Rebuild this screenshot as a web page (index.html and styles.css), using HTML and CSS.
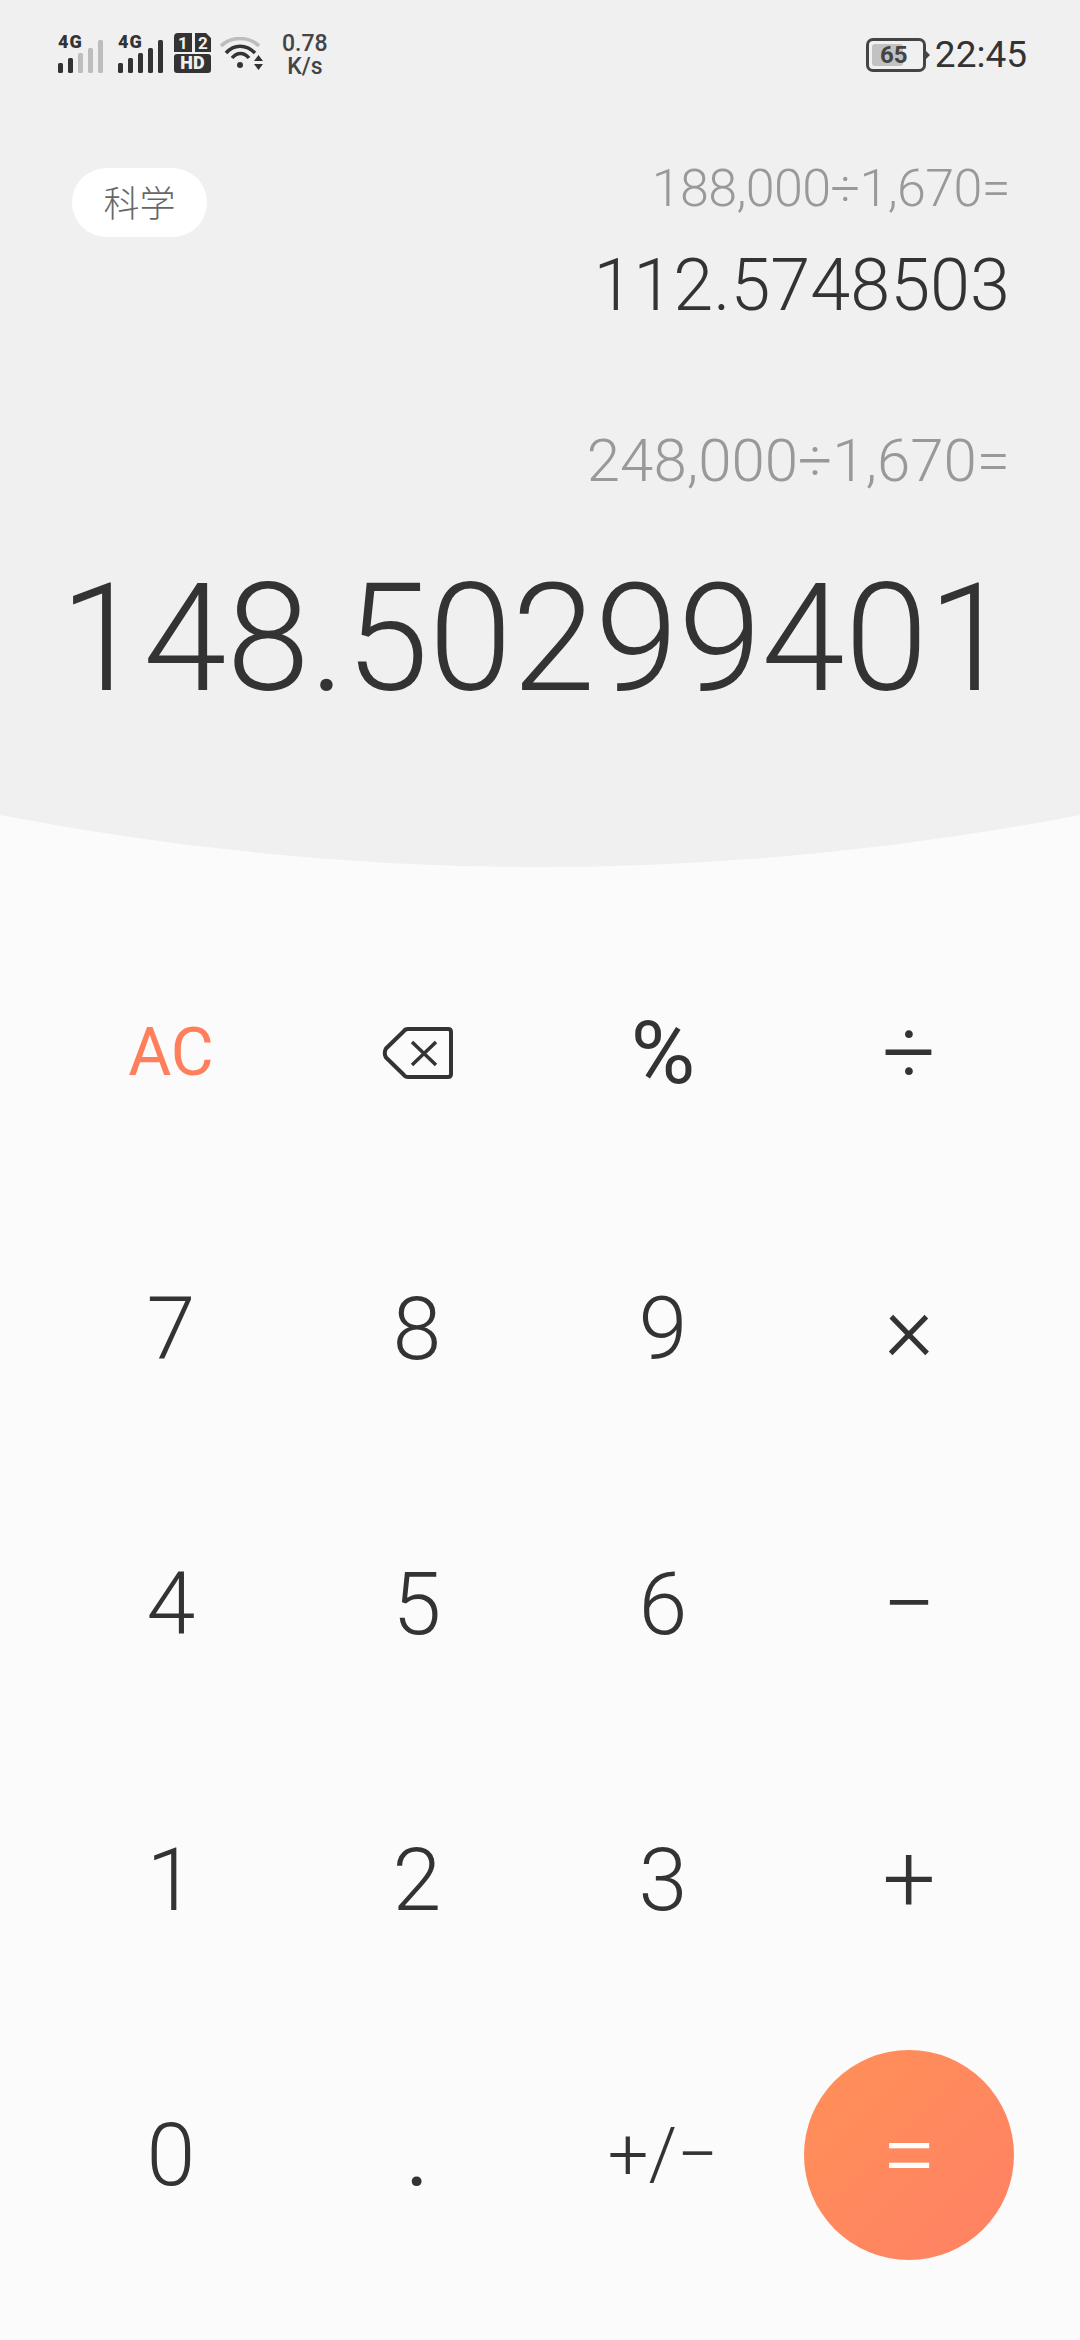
FILE: index.html
```html
<!DOCTYPE html>
<html lang="zh">
<head>
  <meta charset="UTF-8">
  <meta name="viewport" content="width=device-width, initial-scale=1.0">
  <title>Calculator</title>
  <link rel="stylesheet" href="styles.css">
</head>
<body>
<div class="top">
  <div class="status-bar">
    <div class="status-left">
      <svg class="signal" width="46" height="44" viewBox="0 -2 46 44">
        <text x="0" y="16" class="net">4G</text>
        <rect x="0" y="31" width="5" height="10" rx="1.500" fill="#333"/>
        <rect x="10" y="26" width="5" height="15" rx="1.500" fill="#333"/>
        <rect x="20" y="21" width="5" height="20" rx="1.500" fill="#bdbdbd"/>
        <rect x="30" y="16" width="5" height="25" rx="1.500" fill="#bdbdbd"/>
        <rect x="40" y="8" width="5" height="33" rx="1.500" fill="#bdbdbd"/>
      </svg>
      <svg class="signal" width="46" height="44" viewBox="0 -2 46 44">
        <text x="0" y="16" class="net">4G</text>
        <rect x="0" y="31" width="5" height="10" rx="1.500" fill="#333"/>
        <rect x="10" y="26" width="5" height="15" rx="1.500" fill="#333"/>
        <rect x="20" y="21" width="5" height="20" rx="1.500" fill="#333"/>
        <rect x="30" y="16" width="5" height="25" rx="1.500" fill="#333"/>
        <rect x="40" y="8" width="5" height="33" rx="1.500" fill="#333"/>
      </svg>
      <svg class="sim" width="37" height="40" viewBox="0 0 37 40">
        <path d="M4 0h14v19H0V4a4 4 0 0 1 4-4zM21 0h11l5 5v14H21z" fill="#333"/>
        <rect x="0" y="21" width="37" height="19" rx="3" fill="#333"/>
        <text x="9" y="16" class="sim-num">1</text>
        <text x="29" y="16" class="sim-num">2</text>
        <text x="18.500" y="36" class="sim-hd">HD</text>
      </svg>
      <svg class="wifi" width="44" height="34" viewBox="0 0 44 34">
        <path d="M1 9C11 -1 29 -1 39 9" fill="none" stroke="#bdbdbd" stroke-width="3.500"/>
        <path d="M6 16C14 7 26 7 35 16" fill="none" stroke="#333" stroke-width="3.500"/>
        <path d="M12 21C17 15 24 15 29 21" fill="none" stroke="#333" stroke-width="3.500"/>
        <circle cx="20" cy="28" r="3" fill="#333"/>
        <path d="M38.500 18l4.500 6h-9zM38.500 33l4.500-6h-9z" fill="#333"/>
      </svg>
      <div class="speed"><span>0.78</span><span>K/s</span></div>
    </div>
    <div class="status-right">
      <div class="battery">
        <div class="battery-fill"></div>
        <span class="battery-num">65</span>
      </div>
      <span class="clock">22:45</span>
    </div>
  </div>

  <div class="display">
    <div class="history">
      <div class="mode">科学</div>
      <div class="history-lines">
        <div class="expr-small">188,000÷1,670=</div>
        <div class="result-small">112.5748503</div>
      </div>
    </div>
    <div class="expr">248,000÷1,670=</div>
    <div class="result">148.50299401</div>
  </div>
</div>
<svg class="curve" width="1080" height="52" viewBox="0 0 1080 52">
  <path d="M0 0H1080V0Q540 104 0 0z" fill="#f0f0f0"/>
</svg>

<div class="keypad">
  <button class="key key-clear">AC</button>
  <button class="key">
    <svg width="71" height="52" viewBox="0 0 71 52" fill="none" stroke="#333" stroke-width="4">
      <path d="M66 2H26q-3 0-4.500 2.500L4 21.500q-2.500 4.500 0 9L21.500 47.500Q23 50 26 50H66q3 0 3-3V5q0-3-3-3z" stroke-linejoin="round"/>
      <path d="M30 15L54 38M54 15L30 38" stroke-width="3.500"/>
    </svg>
  </button>
  <button class="key key-pct">%</button>
  <button class="key key-op">÷</button>
  <button class="key">7</button>
  <button class="key">8</button>
  <button class="key">9</button>
  <button class="key key-op">×</button>
  <button class="key">4</button>
  <button class="key">5</button>
  <button class="key">6</button>
  <button class="key key-op">−</button>
  <button class="key">1</button>
  <button class="key">2</button>
  <button class="key">3</button>
  <button class="key key-op">+</button>
  <button class="key">0</button>
  <button class="key key-dot">.</button>
  <button class="key key-sign">+/−</button>
  <button class="key"><span class="equals">=</span></button>
</div>
</body>
</html>
```

FILE: styles.css
```css
* {
  box-sizing: border-box;
}
html, body {
  margin: 0;
  padding: 0;
}
body {
  width: 1080px;
  height: 2340px;
  overflow: hidden;
  background-color: #fbfbfb;
  color: #333;
  font-family: Roboto, "Noto Sans CJK SC", sans-serif;
}
.top {
  height: 815px;
  background-color: #f0f0f0;
}
.curve {
  display: block;
}

/* status bar */
.status-bar {
  display: flex;
  justify-content: space-between;
  align-items: center;
  height: 110px;
  padding: 0 53px 4px 58px;
}
.status-left {
  display: flex;
  align-items: center;
  gap: 10px;
}
.status-right {
  display: flex;
  align-items: center;
  gap: 9px;
  margin-top: 3px;
}
.signal {
  margin-top: -2px;
}
.signal + .signal {
  margin-left: 4px;
}
.net {
  font-size: 18px;
  font-weight: 900;
  letter-spacing: 1px;
  fill: #333;
}
.sim-num {
  font-size: 17px;
  font-weight: 700;
  fill: #f0f0f0;
  text-anchor: middle;
}
.sim-hd {
  font-size: 18px;
  font-weight: 900;
  fill: #f0f0f0;
  text-anchor: middle;
}
.wifi {
  margin: 2px 0 0 -1px;
}
.speed {
  display: flex;
  flex-direction: column;
  align-items: center;
  margin: 3px 0 0 8px;
  font-size: 23px;
  font-weight: 500;
  line-height: 23px;
  color: #444;
}
.battery {
  position: relative;
  display: flex;
  align-items: center;
  justify-content: center;
  width: 60px;
  height: 34px;
  padding-right: 4px;
  border: 3px solid #444;
  border-radius: 7px;
}
.battery::after {
  content: "";
  position: absolute;
  right: -7px;
  top: 10px;
  border-left: 4px solid #444;
  border-top: 4px solid transparent;
  border-bottom: 4px solid transparent;
}
.battery-fill {
  position: absolute;
  left: 3px;
  top: 3px;
  bottom: 3px;
  width: 31px;
  border-radius: 3px;
  background-color: #c2c2c2;
}
.battery-num {
  position: relative;
  font-size: 24px;
  font-weight: 700;
  color: #444;
}
.clock {
  font-size: 37px;
  font-weight: 400;
  color: #333;
}

/* display */
.display {
  display: flex;
  flex-direction: column;
  padding: 0 70px 0 60px;
  text-align: right;
  font-weight: 300;
}
.history {
  display: flex;
  justify-content: space-between;
  align-items: flex-start;
}
.mode {
  margin: 58px 0 0 12px;
  padding-top: 3px;
  width: 135px;
  height: 69px;
  border-radius: 35px;
  background-color: #fff;
  color: #666;
  font-size: 36px;
  line-height: 69px;
  text-align: center;
}
.expr-small {
  margin-top: 49px;
  font-size: 52px;
  line-height: 60px;
  letter-spacing: -0.6px;
  color: #999;
}
.result-small {
  margin-top: 27px;
  font-size: 72px;
  line-height: 80px;
}
.expr {
  margin-top: 100px;
  font-size: 60px;
  line-height: 70px;
  color: #999;
}
.result {
  margin: 58px 7px 0 0;
  font-size: 150px;
  line-height: 170px;
  white-space: nowrap;
}

/* keys */
.keypad {
  display: grid;
  grid-template-columns: repeat(4, 246px);
  grid-auto-rows: 275.5px;
  padding: 48px 48px 0;
}
.key {
  display: flex;
  align-items: center;
  justify-content: center;
  padding: 0;
  border: none;
  background: none;
  color: #333;
  font-family: inherit;
  font-size: 88px;
  font-weight: 300;
}
.key-clear {
  color: #ff7f5c;
  font-size: 66px;
  font-weight: 400;
}
.key-op {
  font-size: 94px;
}
.key-pct {
  font-size: 88px;
  font-weight: 400;
}
.key-dot {
  font-weight: 400;
}
.key-sign {
  font-size: 72px;
}
.equals {
  display: flex;
  align-items: center;
  justify-content: center;
  width: 210px;
  height: 210px;
  border-radius: 50%;
  background: linear-gradient(135deg, #ff9058, #ff8164);
  color: #fff;
  font-size: 98px;
  font-weight: 300;
}
```
